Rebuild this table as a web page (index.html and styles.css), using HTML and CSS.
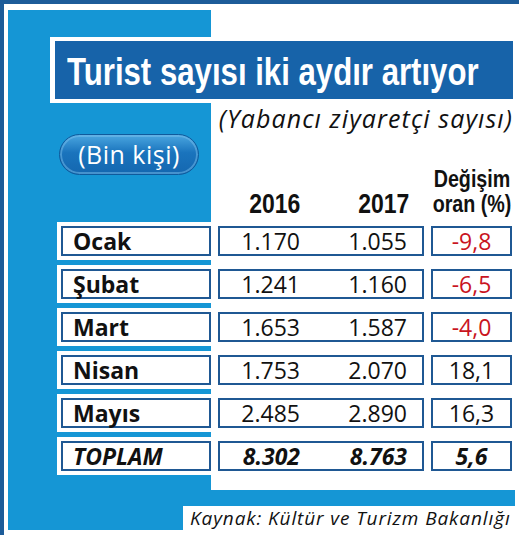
FILE: index.html
```html
<!DOCTYPE html>
<html lang="tr">
<head>
    <meta charset="UTF-8">
    <meta name="viewport" content="width=device-width, initial-scale=1.0">
    <title>Turist sayısı iki aydır artıyor</title>
    <link rel="stylesheet" href="styles.css">
</head>
<body>

<div class="frame">
    <div class="panel">
        <div class="main">
            <h1 class="title"><span class="narrow">Turist sayısı iki aydır artıyor</span></h1>
            <p class="subtitle">(Yabancı ziyaretçi sayısı)</p>
            <div class="head">
                <div class="unit">(Bin kişi)</div>
                <div class="years">
                    <div><span class="narrow">2016</span></div>
                    <div><span class="narrow">2017</span></div>
                </div>
                <div class="change"><span class="narrow">Değişim<br>oran (%)</span></div>
            </div>
            <div class="row">
                <div class="cell month">Ocak</div>
                <div class="cell values"><span>1.170</span><span>1.055</span></div>
                <div class="cell rate down">-9,8</div>
            </div>
            <div class="row">
                <div class="cell month">Şubat</div>
                <div class="cell values"><span>1.241</span><span>1.160</span></div>
                <div class="cell rate down">-6,5</div>
            </div>
            <div class="row">
                <div class="cell month">Mart</div>
                <div class="cell values"><span>1.653</span><span>1.587</span></div>
                <div class="cell rate down">-4,0</div>
            </div>
            <div class="row">
                <div class="cell month">Nisan</div>
                <div class="cell values"><span>1.753</span><span>2.070</span></div>
                <div class="cell rate">18,1</div>
            </div>
            <div class="row">
                <div class="cell month">Mayıs</div>
                <div class="cell values"><span>2.485</span><span>2.890</span></div>
                <div class="cell rate">16,3</div>
            </div>
            <div class="row total">
                <div class="cell month">TOPLAM</div>
                <div class="cell values"><span>8.302</span><span>8.763</span></div>
                <div class="cell rate">5,6</div>
            </div>
        </div>
        <div class="source-bar">
            <div class="source">Kaynak: Kültür ve Turizm Bakanlığı</div>
        </div>
    </div>
</div>

</body>
</html>
```

FILE: styles.css
```css
body {
    margin: 0;
    font-family: "Open Sans", sans-serif;
    color: #111;
    background: #fff;
}
.frame {
    box-sizing: border-box;
    width: 519px;
    height: 535px;
    overflow: hidden;
    border-top: 4px solid #1d5c99;
    border-left: 4px solid #1d5c99;
    padding: 6px 4px 0 4px;
}
/* no condensed face installed: squeeze Liberation Sans Bold */
.narrow {
    display: inline-block;
    font-family: "Liberation Sans", Arial, sans-serif;
    font-weight: bold;
    white-space: nowrap;
    transform: scaleX(0.82);
}
.main {
    box-sizing: border-box;
    height: 480px;
    padding-top: 27px;
    background: linear-gradient(to right, #1596d5 203px, #fff 203px);
}
.title {
    margin: 0 0 0 42px;
    height: 58px;
    overflow: hidden;
    border-style: solid;
    border-color: #fff;
    border-width: 4px 2px 4px 5px;
    padding-left: 12px;
    background: #1763a9;
    color: #fff;
    font-size: 38px;
    line-height: 58px;
    white-space: nowrap;
}
.title .narrow {
    transform-origin: left center;
}
.subtitle {
    margin: 0;
    padding-right: 2px;
    text-align: right;
    font-style: italic;
    font-size: 25px;
    letter-spacing: 1.1px;
    line-height: 31px;
}
.head {
    box-sizing: border-box;
    height: 88px;
    margin-left: 49px;
    padding: 0 0 4px 4px;
    display: grid;
    grid-template-columns: 150px 206px 81px;
    column-gap: 7px;
    align-items: end;
}
.unit {
    align-self: start;
    box-sizing: border-box;
    width: 140px;
    height: 41px;
    margin-left: -2px;
    border: 1px solid #0f5a9c;
    border-radius: 21px;
    background: linear-gradient(#4aa6e0, #1a74bd 45%, #1467b0);
    box-shadow: inset 0 0 0 2px rgba(120, 190, 235, 0.5);
    color: #fff;
    text-align: center;
    font-size: 25px;
    letter-spacing: 0.5px;
    line-height: 38px;
}
.years {
    display: grid;
    grid-template-columns: 80px 1fr;
    padding: 0 15px 0 2px;
    text-align: right;
    font-size: 28px;
    line-height: 28px;
}
.years .narrow {
    transform-origin: right center;
}
.change {
    display: flex;
    justify-content: center;
    margin-bottom: 2px;
    text-align: center;
    font-size: 24px;
    line-height: 25px;
}
.row {
    margin: 0 0 5px 49px;
    padding: 4px 0 4px 4px;
    background: #fff;
    display: grid;
    grid-template-columns: 150px 206px 81px;
    column-gap: 7px;
}
.cell {
    box-sizing: border-box;
    height: 30px;
    border: 2px solid #1f5893;
    font-size: 23px;
    line-height: 26px;
    white-space: nowrap;
}
.month {
    padding-left: 10px;
    font-weight: bold;
}
.values {
    display: grid;
    grid-template-columns: 80px 1fr;
    padding-right: 15px;
    text-align: right;
}
.rate {
    text-align: center;
}
.rate.down {
    color: #c9141e;
}
.total .cell {
    font-weight: bold;
    font-style: italic;
}
.source-bar {
    height: 40px;
    box-sizing: border-box;
    padding-top: 16px;
    background: #1596d5;
}
.source {
    height: 24px;
    margin-left: 175px;
    padding-left: 7px;
    background: #fff;
    font-style: italic;
    font-size: 19px;
    letter-spacing: 0.9px;
    line-height: 24px;
    white-space: nowrap;
}
```
